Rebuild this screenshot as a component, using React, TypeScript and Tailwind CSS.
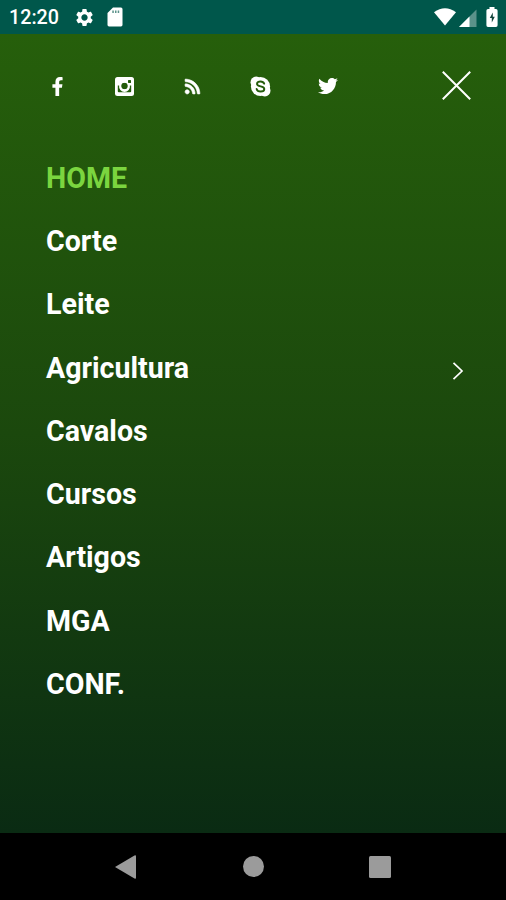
import { FaFacebookF, FaRss, FaTwitter } from "react-icons/fa";
import { MdSettings } from "react-icons/md";

const items = [
  { label: "HOME", active: true },
  { label: "Corte" },
  { label: "Leite" },
  { label: "Agricultura", children: true },
  { label: "Cavalos" },
  { label: "Cursos" },
  { label: "Artigos" },
  { label: "MGA" },
  { label: "CONF." },
];

function Instagram() {
  return (
    <svg viewBox="0 0 19 19" className="h-[19px] w-[19px]">
      <rect width="19" height="19" rx="2.5" fill="white" />
      <g fill="#245c0b">
        <path d="M2.8 8.5h1.4a5.4 5.4 0 1 0 10.6 0h1.4v5.8a1 1 0 0 1-1 1H3.8a1 1 0 0 1-1-1z" />
        <circle cx="9.5" cy="9" r="3.3" />
        <rect x="13" y="3" width="3" height="3" rx="0.5" />
      </g>
      <circle cx="9.5" cy="9" r="4.2" fill="none" stroke="white" strokeWidth="1.5" />
    </svg>
  );
}

function Skype() {
  return (
    <svg viewBox="0 0 21 21" className="h-[21px] w-[21px]">
      <g fill="white">
        <circle cx="10.5" cy="10.5" r="9.6" />
        <circle cx="6.2" cy="6.2" r="5.7" />
        <circle cx="14.8" cy="14.8" r="5.7" />
      </g>
      <path
        d="M14.2 7.7C13.6 6.2 12.2 5.5 10.5 5.5 8.5 5.5 7 6.4 7 7.9c0 3.3 7.3 1.7 7.3 5 0 1.6-1.7 2.6-3.7 2.6-2 0-3.5-.9-4-2.6"
        fill="none"
        stroke="#245c0b"
        strokeWidth="1.9"
        strokeLinecap="round"
      />
    </svg>
  );
}

function StatusBar() {
  return (
    <div className="flex h-[34px] items-center justify-between bg-[#00574b] pl-[9px] pr-[8px] text-white">
      <div className="flex items-center">
        <span className="w-[65px] pt-[2px] text-[19.7px] font-medium leading-5">12:20</span>
        <MdSettings className="h-[21px] w-[21px]" />
        <svg viewBox="0 0 16 20" className="ml-[12px] h-5 w-4">
          <path
            fill="white"
            d="M6 .5h8A1.7 1.7 0 0 1 15.5 2v16a1.7 1.7 0 0 1-1.5 1.5H2A1.7 1.7 0 0 1 .5 18V6z"
          />
          <path fill="#5b928a" d="M5.3 3.5h1.5V6H5.3zM8 3.5h1.5V6H8zM10.7 3.5h1.5V6h-1.5z" />
        </svg>
      </div>
      <div className="flex items-center">
        <svg viewBox="0 0 22 18" className="h-[18px] w-[22px]">
          <path fill="white" d="M0 4.3Q11-4 22 4.3L11 17.5z" />
        </svg>
        <svg viewBox="0 0 18 18" className="ml-[3px] mt-[2px] h-[18px] w-[18px]">
          <path fill="#5b928a" d="M0 18 17.5.5V18z" />
          <path fill="white" d="M0 18 10.5 7.5V18z" />
        </svg>
        <svg viewBox="0 0 12 20" className="ml-[9px] h-5 w-3">
          <path fill="white" d="M3.5 0h5v2H10a1.7 1.7 0 0 1 1.6 1.7v14.6A1.7 1.7 0 0 1 10 20H2a1.7 1.7 0 0 1-1.6-1.7V3.7A1.7 1.7 0 0 1 2 2h1.5z" />
          <path fill="#12433b" d="M6.8 5.5 3.8 11h2v4.5l3-5.7h-2z" />
        </svg>
      </div>
    </div>
  );
}

function SocialBar() {
  return (
    <div className="flex h-[102px] items-center justify-between pr-[35px] pl-[46px] text-white">
      <div className="flex items-center gap-[45.7px] pt-[2px]">
        <a href="#" aria-label="Facebook" className="flex w-[22px] justify-center">
          <FaFacebookF className="h-[19px] w-[19px]" />
        </a>
        <a href="#" aria-label="Instagram" className="flex w-[22px] justify-center">
          <Instagram />
        </a>
        <a href="#" aria-label="RSS" className="flex w-[22px] justify-center">
          <FaRss className="h-[17px] w-[17px]" stroke="white" strokeWidth="18" />
        </a>
        <a href="#" aria-label="Skype" className="flex w-[22px] justify-center">
          <Skype />
        </a>
        <a href="#" aria-label="Twitter" className="flex w-[22px] justify-center">
          <FaTwitter className="h-5 w-5" />
        </a>
      </div>
      <button type="button" aria-label="Fechar">
        <svg viewBox="0 0 29 29" className="h-[29px] w-[29px]">
          <path d="M.8.8 28.2 28.2M28.2.8.8 28.2" stroke="white" strokeWidth="2" />
        </svg>
      </button>
    </div>
  );
}

export default function App() {
  return (
    <div className="flex h-[900px] w-[506px] flex-col overflow-hidden font-['Roboto',sans-serif]">
      <StatusBar />
      <div className="flex-1 bg-linear-to-b/srgb from-[#265f0b] via-[#1b480d] to-[#0a2b13]">
        <SocialBar />
        <nav className="mt-[10px]">
          {items.map((item) => (
            <a
              key={item.label}
              href="#"
              className="flex h-[63.3px] items-center justify-between pr-[42px] pl-[46px]"
            >
              <span
                className={
                  item.active
                    ? "text-[28.6px] font-bold leading-8 text-[#7bd53f]"
                    : "text-[28.6px] font-bold leading-8 text-white"
                }
              >
                {item.label}
              </span>
              {item.children && (
                <svg viewBox="0 0 12 18" className="mt-[7px] h-[18px] w-3">
                  <path d="M1.5.8 10 9l-8.5 8.2" fill="none" stroke="white" strokeWidth="1.7" />
                </svg>
              )}
            </a>
          ))}
        </nav>
      </div>
      <div className="flex h-[67px] items-center bg-black pl-[115px]">
        <svg viewBox="0 0 21 24" className="h-6 w-[21px]">
          <path fill="#9b9b9b" d="M0 12 19.5.5Q21 0 21 1.2v21.6Q21 24 19.5 23.5z" />
        </svg>
        <div className="ml-[107px] h-[21px] w-[21px] rounded-full bg-[#9b9b9b]" />
        <div className="ml-[105px] h-[22px] w-[22px] rounded-[1.5px] bg-[#9b9b9b]" />
      </div>
    </div>
  );
}
